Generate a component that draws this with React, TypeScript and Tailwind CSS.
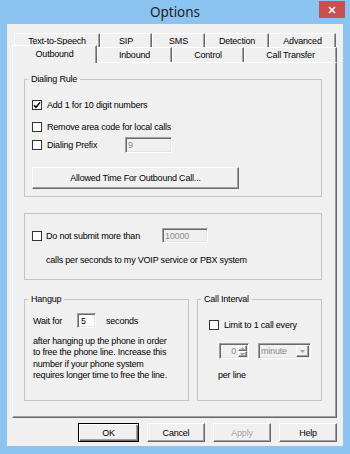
import React from 'react';

const raised =
  'bg-[#f0f0f0] border border-t-white border-l-white border-r-[#696969] border-b-[#696969] shadow-[inset_-1px_-1px_0_#a0a0a0]';
const sunken =
  'border border-t-[#a0a0a0] border-l-[#a0a0a0] border-r-white border-b-white shadow-[inset_1px_1px_0_#696969,inset_-1px_-1px_0_#e3e3e3]';

const Check = ({ checked = false }: { checked?: boolean }) => (
  <span className="w-[10px] h-[10px] shrink-0 border border-[#333333] bg-white flex items-center justify-center">
    {checked && (
      <svg width="8" height="8" viewBox="0 0 8 8">
        <path d="M1 4.2 L3 6.3 L7 1.4" fill="none" stroke="#000" strokeWidth="1.5" />
      </svg>
    )}
  </span>
);

const Tab = ({ label, className }: { label: string; className: string }) => (
  <div
    className={
      'h-[15px] bg-[#f0f0f0] border-l border-t border-white border-r border-r-[#696969] shadow-[inset_-1px_0_0_#a0a0a0] flex items-center justify-center ' +
      className
    }
  >
    {label}
  </div>
);

const Arrow = ({ up = false, color = '#a0a0a0' }: { up?: boolean; color?: string }) => (
  <svg width="5" height="3" viewBox="0 0 5 3">
    <path d={up ? 'M0 3 L2.5 0 L5 3 Z' : 'M0 0 L5 0 L2.5 3 Z'} fill={color} />
  </svg>
);

export default function App() {
  return (
    <div className="w-[350px] h-[454px] bg-[#8bc4f1] flex flex-col font-['Liberation_Sans',Arial,sans-serif] text-[9px] leading-[12px] tracking-[-0.2px] text-black">
      {/* title bar */}
      <div className="h-[24px] relative flex items-center justify-center">
        <span className="font-['Noto_Sans',sans-serif] text-[13.5px] tracking-normal text-[#1e1e1e] -mt-px">Options</span>
        <button className="absolute right-[5px] top-[1px] w-[26px] h-[17px] bg-[#c75050] flex items-center justify-center">
          <svg width="8" height="8" viewBox="0 0 8 8">
            <path d="M1 1 L7 7 M7 1 L1 7" stroke="#fff" strokeWidth="1.6" />
          </svg>
        </button>
      </div>

      {/* client area */}
      <div className="mx-[7px] mb-[8px] flex-1 bg-[#f0f0f0] flex flex-col">
        <div className="flex ml-[7px] mt-[9px] h-[15px]">
          <Tab label="Text-to-Speech" className="w-[86px]" />
          <Tab label="SIP" className="w-[52px]" />
          <Tab label="SMS" className="w-[53px]" />
          <Tab label="Detection" className="w-[64px]" />
          <Tab label="Advanced" className="w-[67px]" />
        </div>
        <div className="flex items-start ml-[5px] -mt-px h-[15px]">
          <div className="relative z-10 -mt-[2px] w-[85px] h-[18px] bg-[#f0f0f0] border-l border-t border-white border-r border-r-[#696969] shadow-[inset_-1px_0_0_#a0a0a0] flex items-center justify-center pb-[2px]">
            Outbound
          </div>
          <Tab label="Inbound" className="w-[75px]" />
          <Tab label="Control" className="w-[72px]" />
          <Tab label="Call Transfer" className="w-[93px]" />
        </div>

        {/* tab panel */}
        <div className={'ml-[5px] w-[325px] h-[356px] flex flex-col ' + raised}>
          <fieldset className="mt-[10px] ml-[11px] w-[298px] border border-[#c4c4c4]">
            <legend className="ml-[3px] px-[3px] leading-[13px]">Dialing Rule</legend>
            <div className="pl-[7px] pb-[7px] flex flex-col">
              <div className="mt-[12px] h-[13px] flex items-center gap-[5px]">
                <Check checked />
                <span>Add 1 for 10 digit numbers</span>
              </div>
              <div className="mt-[9px] h-[13px] flex items-center gap-[5px]">
                <Check />
                <span>Remove area code for local calls</span>
              </div>
              <div className="mt-[4px] h-[16px] flex items-center gap-[5px]">
                <Check />
                <span className="w-[73px]">Dialing Prefix</span>
                <div className={'w-[47px] h-[16px] bg-[#f0f0f0] pl-[2px] flex items-center text-[#8a8a8a] ' + sunken}>9</div>
              </div>
              <button className={'mt-[14px] w-[207px] h-[22px] flex items-center justify-center ' + raised}>
                Allowed Time For Outbound Call...
              </button>
            </div>
          </fieldset>

          <div className="mt-[16px] ml-[11px] w-[298px] border border-[#c4c4c4] pl-[7px] pt-[14px] pb-[13px] flex flex-col">
            <div className="h-[15px] flex items-center gap-[4px]">
              <Check />
              <span className="w-[112px]">Do not submit more than</span>
              <div className={'w-[46px] h-[15px] bg-[#f0f0f0] pl-[2px] flex items-center text-[#8a8a8a] ' + sunken}>10000</div>
            </div>
            <div className="mt-[11px] ml-[14px]">calls per seconds to my VOIP service or PBX system</div>
          </div>

          <div className="mt-[13px] ml-[11px] flex gap-[8px]">
            <fieldset className="w-[165px] h-[108px] border border-[#c4c4c4]">
              <legend className="ml-[3px] px-[3px] leading-[13px]">Hangup</legend>
              <div className="pl-[8px] flex flex-col">
                <div className="mt-[7px] h-[15px] flex items-center">
                  <span className="w-[44px]">Wait for</span>
                  <div className={'w-[19px] h-[15px] bg-white pl-[3px] flex items-center ' + sunken}>5</div>
                  <span className="ml-[10px]">seconds</span>
                </div>
                <p className="mt-[8px] leading-[11.4px]">
                  after hanging up the phone in order
                  <br />
                  to free the phone line. Increase this
                  <br />
                  number if your phone system
                  <br />
                  requires longer time to free the line.
                </p>
              </div>
            </fieldset>

            <fieldset className="w-[125px] h-[108px] border border-[#c4c4c4]">
              <legend className="ml-[3px] px-[3px] leading-[13px]">Call Interval</legend>
              <div className="pl-[11px] flex flex-col">
                <div className="mt-[12px] h-[13px] flex items-center gap-[5px]">
                  <Check />
                  <span>Limit to 1 call every</span>
                </div>
                <div className="mt-[12px] ml-[10px] h-[16px] flex gap-[9px]">
                  <div className={'w-[30px] h-[16px] bg-[#f0f0f0] flex ' + sunken}>
                    <span className="flex-1 text-right pr-[2px] text-[#8a8a8a] leading-[14px]">0</span>
                    <div className="w-[10px] flex flex-col py-px pr-px">
                      <div className={'flex-1 flex items-center justify-center ' + raised}>
                        <Arrow up />
                      </div>
                      <div className={'flex-1 flex items-center justify-center ' + raised}>
                        <Arrow />
                      </div>
                    </div>
                  </div>
                  <div className={'w-[53px] h-[16px] bg-[#f0f0f0] flex ' + sunken}>
                    <span className="flex-1 pl-[2px] text-[#8a8a8a] leading-[14px]">minute</span>
                    <div className={'w-[13px] m-px flex items-center justify-center ' + raised}>
                      <Arrow />
                    </div>
                  </div>
                </div>
                <div className="mt-[10px] ml-[9px]">per line</div>
              </div>
            </fieldset>
          </div>
        </div>

        {/* dialog buttons */}
        <div className="mt-[5px] mr-[6px] flex justify-end gap-[8px]">
          <button className="w-[61px] h-[19px] bg-[#f0f0f0] border border-black shadow-[inset_1px_1px_0_#fff,inset_-1px_-1px_0_#696969,inset_-2px_-2px_0_#a0a0a0] flex items-center justify-center">
            OK
          </button>
          <button className={'w-[58px] h-[19px] flex items-center justify-center ' + raised}>Cancel</button>
          <button className={'w-[58px] h-[19px] flex items-center justify-center text-[#a0a0a0] [text-shadow:1px_1px_0_#fff] ' + raised}>
            Apply
          </button>
          <button className={'w-[58px] h-[19px] flex items-center justify-center ' + raised}>Help</button>
        </div>
      </div>
    </div>
  );
}
